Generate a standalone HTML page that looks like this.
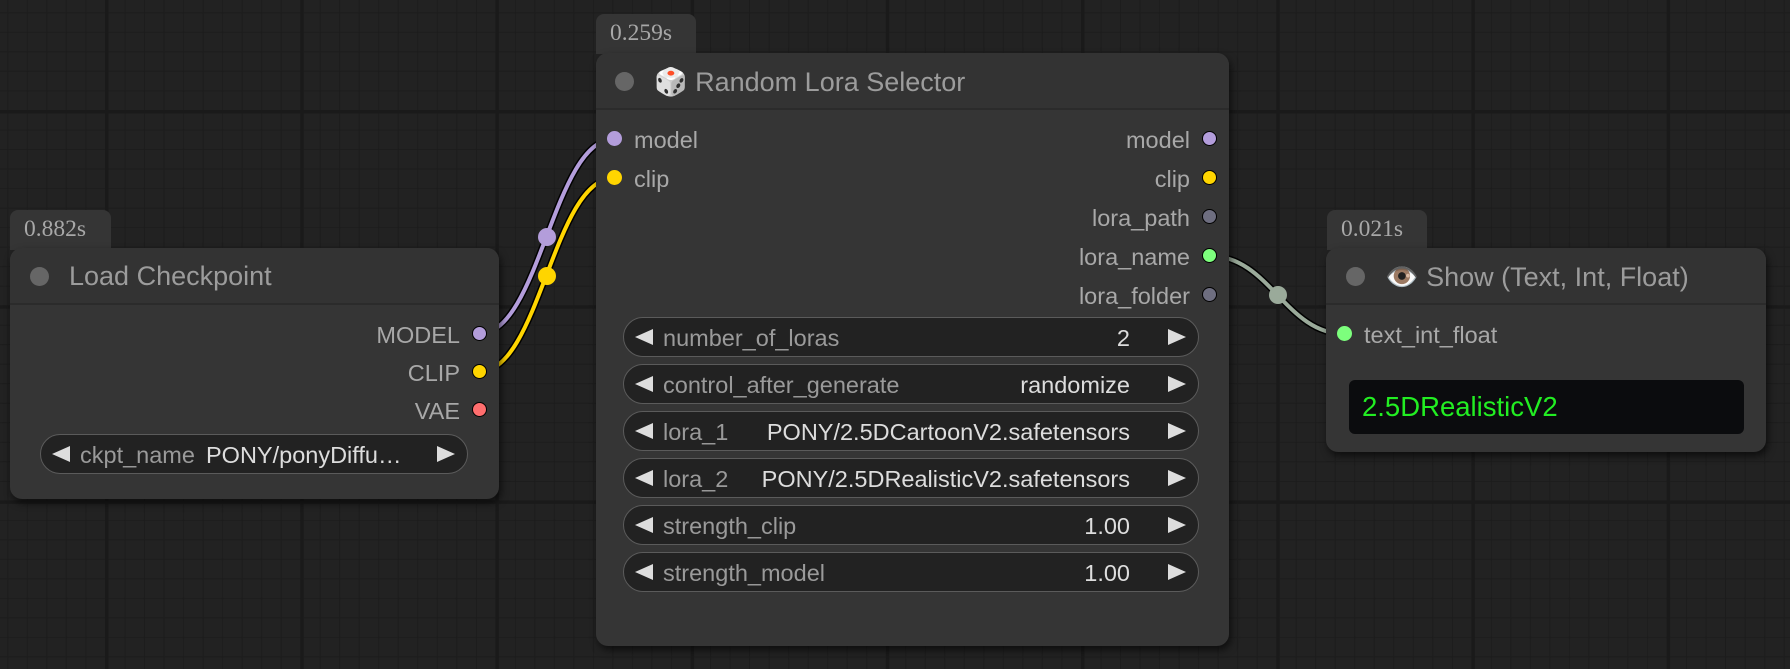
<!DOCTYPE html>
<html><head><meta charset="utf-8"><style>
*{margin:0;padding:0;box-sizing:border-box}
body{width:1790px;height:669px;background:#222;overflow:hidden;position:relative;font-family:"Liberation Sans",sans-serif}
.abs{position:absolute}
.badge{position:absolute;background:#353535;border-radius:8px 8px 0 0;color:#a8a8a8;font-family:"Liberation Serif",serif;font-size:23.5px;padding-left:14px;line-height:38px;height:40px}
.node{position:absolute;background:#353535;border-radius:12px;box-shadow:2px 4px 8px rgba(0,0,0,.6)}
.title{position:absolute;left:0;right:0;top:0;height:57px;border-bottom:2px solid #2b2b2b;background:#333;border-radius:12px 12px 0 0}
.tdot{position:absolute;width:19px;height:19px;border-radius:50%;background:#666;top:19px}
.ttxt{position:absolute;top:13px;font-size:27px;color:#9c9c9c;white-space:nowrap}
.lbl{position:absolute;font-size:23.5px;color:#a8a8a8;white-space:nowrap;line-height:24px}
.dot{position:absolute;width:15px;height:15px;border-radius:50%;border:1.5px solid #000}
.w{position:absolute;height:40px;background:#222;border:1.5px solid #5b5b5b;border-radius:20px;font-size:23.5px}
.w .l{position:absolute;left:39px;top:7px;color:#9a9a9a;white-space:nowrap}
.w .v{position:absolute;right:68px;top:7px;color:#ddd;white-space:nowrap}
.w .al{position:absolute;left:11px;top:11px;width:0;height:0;border-top:8px solid transparent;border-bottom:8px solid transparent;border-right:18px solid #ddd}
.w .ar{position:absolute;right:12px;top:11px;width:0;height:0;border-top:8px solid transparent;border-bottom:8px solid transparent;border-left:18px solid #ddd}
</style></head><body>
<svg class="abs" style="left:0;top:0" width="1790" height="669">
<defs>
<pattern id="g" patternUnits="userSpaceOnUse" x="105" y="110" width="195.2" height="195.2">
<rect width="195.2" height="195.2" fill="#222"/>
<g fill="#1c1c1c">
<rect x="19.5" width="1" height="195.2"/><rect x="39" width="1" height="195.2"/><rect x="58.5" width="1" height="195.2"/><rect x="78" width="1" height="195.2"/><rect x="97.6" width="1" height="195.2"/><rect x="117" width="1" height="195.2"/><rect x="136.6" width="1" height="195.2"/><rect x="156" width="1" height="195.2"/><rect x="175.7" width="1" height="195.2"/>
<rect y="19.5" height="1" width="195.2"/><rect y="39" height="1" width="195.2"/><rect y="58.5" height="1" width="195.2"/><rect y="78" height="1" width="195.2"/><rect y="97.6" height="1" width="195.2"/><rect y="117" height="1" width="195.2"/><rect y="136.6" height="1" width="195.2"/><rect y="156" height="1" width="195.2"/><rect y="175.7" height="1" width="195.2"/>
</g>
<rect x="0" width="3.5" height="195.2" fill="#1a1a1a"/><rect y="0" height="3.5" width="195.2" fill="#1a1a1a"/>
</pattern>
</defs>
<rect width="1790" height="669" fill="url(#g)"/>
<g fill="none" stroke-linecap="round">
<path d="M479 334 C 540 334, 553 139, 614 139" stroke="#000" stroke-width="7"/>
<path d="M479 334 C 540 334, 553 139, 614 139" stroke="#b39ddb" stroke-width="4"/>
<path d="M479 372 C 540 372, 553 178, 614 178" stroke="#000" stroke-width="7"/>
<path d="M479 372 C 540 372, 553 178, 614 178" stroke="#ffd500" stroke-width="4"/>
<path d="M1210 256 C 1270 256, 1285 334, 1345 334" stroke="#000" stroke-width="7"/>
<path d="M1210 256 C 1270 256, 1285 334, 1345 334" stroke="#9aaa9a" stroke-width="4"/>
</g>
<circle cx="547" cy="237" r="9" fill="#b39ddb"/>
<circle cx="547" cy="276" r="9" fill="#ffd500"/>
<circle cx="1278" cy="295" r="9" fill="#9aaa9a"/>
</svg>

<div class="badge" style="left:10px;top:210px;width:101px">0.882s</div>
<div class="node" style="left:10px;top:248px;width:489px;height:251px">
 <div class="title"><div class="tdot" style="left:20px"></div><div class="ttxt" style="left:59px">Load Checkpoint</div></div>
 <div class="lbl" style="right:39px;top:75px">MODEL</div><div class="dot" style="left:462px;top:78px;background:#b39ddb"></div>
 <div class="lbl" style="right:39px;top:113px">CLIP</div><div class="dot" style="left:462px;top:116px;background:#ffd500"></div>
 <div class="lbl" style="right:39px;top:151px">VAE</div><div class="dot" style="left:462px;top:154px;background:#ff6e6e"></div>
 <div class="w" style="left:30px;top:186px;width:428px"><div class="al"></div><div class="l" style="left:39px">ckpt_name</div><div class="v" style="left:165px;right:auto;color:#ddd">PONY/ponyDiffu…</div><div class="ar"></div></div>
</div>

<div class="badge" style="left:596px;top:14px;width:100px">0.259s</div>
<div class="node" style="left:596px;top:53px;width:633px;height:593px">
 <div class="title"><div class="tdot" style="left:19px"></div><div class="ttxt" style="left:58px">🎲 Random Lora Selector</div></div>
 <div class="dot" style="left:11px;top:78px;background:#b39ddb;border-color:#b39ddb"></div><div class="lbl" style="left:38px;top:75px">model</div>
 <div class="dot" style="left:11px;top:117px;background:#ffd500;border-color:#ffd500"></div><div class="lbl" style="left:38px;top:114px">clip</div>
 <div class="lbl" style="right:39px;top:75px">model</div><div class="dot" style="left:606px;top:78px;background:#b39ddb"></div>
 <div class="lbl" style="right:39px;top:114px">clip</div><div class="dot" style="left:606px;top:117px;background:#ffd500"></div>
 <div class="lbl" style="right:39px;top:153px">lora_path</div><div class="dot" style="left:606px;top:156px;background:#6e6e80"></div>
 <div class="lbl" style="right:39px;top:192px">lora_name</div><div class="dot" style="left:606px;top:195px;background:#7dff7d"></div>
 <div class="lbl" style="right:39px;top:231px">lora_folder</div><div class="dot" style="left:606px;top:234px;background:#6e6e80"></div>
 <div class="w" style="left:27px;top:264px;width:576px"><div class="al"></div><div class="l">number_of_loras</div><div class="v">2</div><div class="ar"></div></div>
 <div class="w" style="left:27px;top:311px;width:576px"><div class="al"></div><div class="l">control_after_generate</div><div class="v">randomize</div><div class="ar"></div></div>
 <div class="w" style="left:27px;top:358px;width:576px"><div class="al"></div><div class="l">lora_1</div><div class="v">PONY/2.5DCartoonV2.safetensors</div><div class="ar"></div></div>
 <div class="w" style="left:27px;top:405px;width:576px"><div class="al"></div><div class="l">lora_2</div><div class="v">PONY/2.5DRealisticV2.safetensors</div><div class="ar"></div></div>
 <div class="w" style="left:27px;top:452px;width:576px"><div class="al"></div><div class="l">strength_clip</div><div class="v">1.00</div><div class="ar"></div></div>
 <div class="w" style="left:27px;top:499px;width:576px"><div class="al"></div><div class="l">strength_model</div><div class="v">1.00</div><div class="ar"></div></div>
</div>

<div class="badge" style="left:1327px;top:210px;width:100px">0.021s</div>
<div class="node" style="left:1326px;top:248px;width:440px;height:204px">
 <div class="title"><div class="tdot" style="left:20px"></div><div class="ttxt" style="left:59px">👁️ Show (Text, Int, Float)</div></div>
 <div class="dot" style="left:11px;top:78px;background:#7dff7d;border-color:#7dff7d"></div><div class="lbl" style="left:38px;top:75px">text_int_float</div>
 <div class="abs" style="left:23px;top:132px;width:395px;height:54px;background:#0b0c0e;border-radius:6px;color:#22ee22;font-size:27.5px;padding:11px 0 0 13px">2.5DRealisticV2</div>
</div>
</body></html>
